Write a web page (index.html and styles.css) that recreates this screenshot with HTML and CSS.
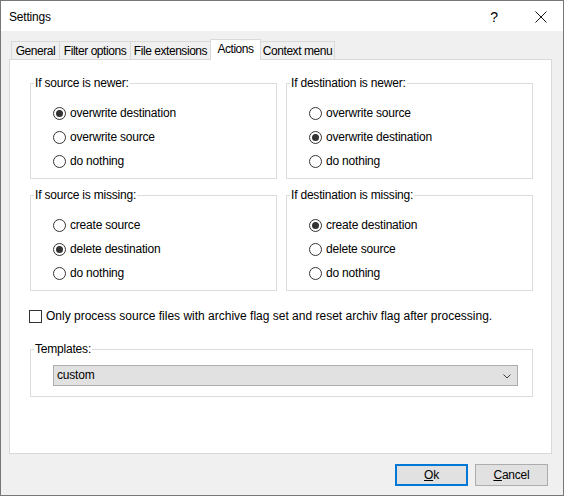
FILE: index.html
```html
<!DOCTYPE html>
<html>
<head>
<meta charset="utf-8">
<link rel="stylesheet" href="styles.css">
</head>
<body>
<div class="window">
  <div class="titlebar">
    <span class="title">Settings</span>
    <span class="help">?</span>
    <span class="close">
      <svg width="12" height="12" viewBox="0 0 12 12"><path d="M0.5 0.5 L11.5 11.5 M11.5 0.5 L0.5 11.5" stroke="#111" stroke-width="1" fill="none"/></svg>
    </span>
  </div>
  <div class="client">
    <div class="tabs">
      <div class="tab t-general">General</div>
      <div class="tab t-filter">Filter options</div>
      <div class="tab t-ext">File extensions</div>
      <div class="tab active t-actions">Actions</div>
      <div class="tab t-context">Context menu</div>
    </div>
    <div class="panel">
      <div class="groups">
        <fieldset class="group">
          <legend>If source is newer:</legend>
          <div class="opt"><span class="radio checked"></span><span>overwrite destination</span></div>
          <div class="opt"><span class="radio"></span><span>overwrite source</span></div>
          <div class="opt"><span class="radio"></span><span>do nothing</span></div>
        </fieldset>
        <fieldset class="group">
          <legend>If destination is newer:</legend>
          <div class="opt"><span class="radio"></span><span>overwrite source</span></div>
          <div class="opt"><span class="radio checked"></span><span>overwrite destination</span></div>
          <div class="opt"><span class="radio"></span><span>do nothing</span></div>
        </fieldset>
        <fieldset class="group">
          <legend>If source is missing:</legend>
          <div class="opt"><span class="radio"></span><span>create source</span></div>
          <div class="opt"><span class="radio checked"></span><span>delete destination</span></div>
          <div class="opt"><span class="radio"></span><span>do nothing</span></div>
        </fieldset>
        <fieldset class="group">
          <legend>If destination is missing:</legend>
          <div class="opt"><span class="radio checked"></span><span>create destination</span></div>
          <div class="opt"><span class="radio"></span><span>delete source</span></div>
          <div class="opt"><span class="radio"></span><span>do nothing</span></div>
        </fieldset>
      </div>
      <div class="check-row"><span class="checkbox"></span><span class="check-label">Only process source files with archive flag set and reset archiv flag after processing.</span></div>
      <fieldset class="templates">
        <legend>Templates:</legend>
        <div class="combo">
          <span>custom</span>
          <svg width="8" height="5" viewBox="0 0 8 5"><path d="M0.5 0.5 L4 4 L7.5 0.5" stroke="#404040" stroke-width="1" fill="none"/></svg>
        </div>
      </fieldset>
    </div>
    <div class="footer">
      <div class="btn default"><span><u>O</u>k</span></div>
      <div class="btn"><span><u>C</u>ancel</span></div>
    </div>
  </div>
</div>
</body>
</html>
```
FILE: styles.css
```css
html, body {
  margin: 0;
  padding: 0;
  background: #f0f0f0;
}
body {
  font-family: "Liberation Sans", Arial, sans-serif;
  font-size: 12px;
  letter-spacing: -0.2px;
  color: #000;
}
.window {
  width: 564px;
  height: 496px;
  box-sizing: border-box;
  border: 1px solid #777;
  display: flex;
  flex-direction: column;
  background: #f0f0f0;
}
.titlebar {
  height: 30px;
  flex: none;
  background: #fff;
  display: flex;
  align-items: center;
}
.title {
  margin-left: 8px;
  flex: 1;
  line-height: 15px;
  padding-top: 2px;
}
.help {
  font-size: 14px;
  letter-spacing: 0;
  margin-right: 37px;
  padding-top: 1px;
}
.close {
  display: flex;
  margin-right: 16px;
  padding-top: 1px;
}
.client {
  flex: 1;
  display: flex;
  flex-direction: column;
  padding-top: 8px;
}
.tabs {
  display: flex;
  align-items: flex-end;
  height: 20px;
  padding-left: 10px;
  letter-spacing: -0.45px;
}
.tab {
  box-sizing: border-box;
  height: 18px;
  border: 1px solid #d9d9d9;
  border-bottom: none;
  background: #f0f0f0;
  display: flex;
  justify-content: center;
  align-items: center;
  line-height: 15px;
  padding-top: 1px;
  margin-left: -1px;
}
.t-general { margin-left: 0; width: 49px; }
.t-filter { width: 72px; }
.t-ext { width: 81px; }
.t-context { width: 75px; }
.tab.active {
  position: relative;
  z-index: 1;
  width: 51px;
  height: 21px;
  margin-bottom: -1px;
  background: #fff;
  align-items: flex-start;
  padding-top: 2px;
}
.panel {
  box-sizing: border-box;
  width: 543px;
  height: 395px;
  margin-left: 8px;
  background: #fff;
  border: 1px solid #d9d9d9;
  padding: 16px 18px 0 20px;
  display: flex;
  flex-direction: column;
}
.groups {
  display: grid;
  grid-template-columns: 247px 247px;
  column-gap: 9px;
  row-gap: 9px;
}
fieldset {
  margin: 0;
  border: 1px solid #dcdcdc;
  min-width: 0;
}
legend {
  padding: 0 1px;
  line-height: 15px;
}
.group {
  padding: 10px 0 5px 3px;
}
.opt {
  display: flex;
  align-items: center;
  height: 24px;
  margin-left: 19px;
  gap: 4px;
  line-height: 15px;
}
.radio {
  box-sizing: border-box;
  width: 13px;
  height: 13px;
  border: 1px solid #333;
  border-radius: 50%;
  flex: none;
  display: flex;
  align-items: center;
  justify-content: center;
  background: #fff;
}
.radio.checked::after {
  content: "";
  width: 7px;
  height: 7px;
  border-radius: 50%;
  background: #333;
}
.check-row {
  display: flex;
  align-items: center;
  gap: 4px;
  margin-top: 18px;
  margin-left: -1px;
  height: 15px;
  line-height: 15px;
}
.check-label {
  letter-spacing: 0;
}
.checkbox {
  box-sizing: border-box;
  width: 13px;
  height: 13px;
  border: 1px solid #333;
  background: #fff;
  flex: none;
}
.templates {
  margin-top: 18px;
  padding: 8px 14px 10px 3px;
}
.combo {
  box-sizing: border-box;
  height: 21px;
  margin-left: 19px;
  background: #e1e1e1;
  border: 1px solid #adadad;
  display: flex;
  align-items: center;
  justify-content: space-between;
  padding: 0 6px 0 3px;
  line-height: 15px;
}
.combo svg {
  margin-top: 1px;
}
.footer {
  flex: 1;
  display: flex;
  justify-content: flex-end;
  align-items: flex-start;
  gap: 7px;
  padding: 10px 15px 0 0;
}
.btn {
  box-sizing: border-box;
  width: 73px;
  height: 22px;
  background: #e1e1e1;
  border: 1px solid #adadad;
  display: flex;
  align-items: center;
  justify-content: center;
  line-height: 15px;
}
.btn.default {
  border: 2px solid #0078d7;
}
.btn u {
  text-underline-offset: 1px;
}
```
